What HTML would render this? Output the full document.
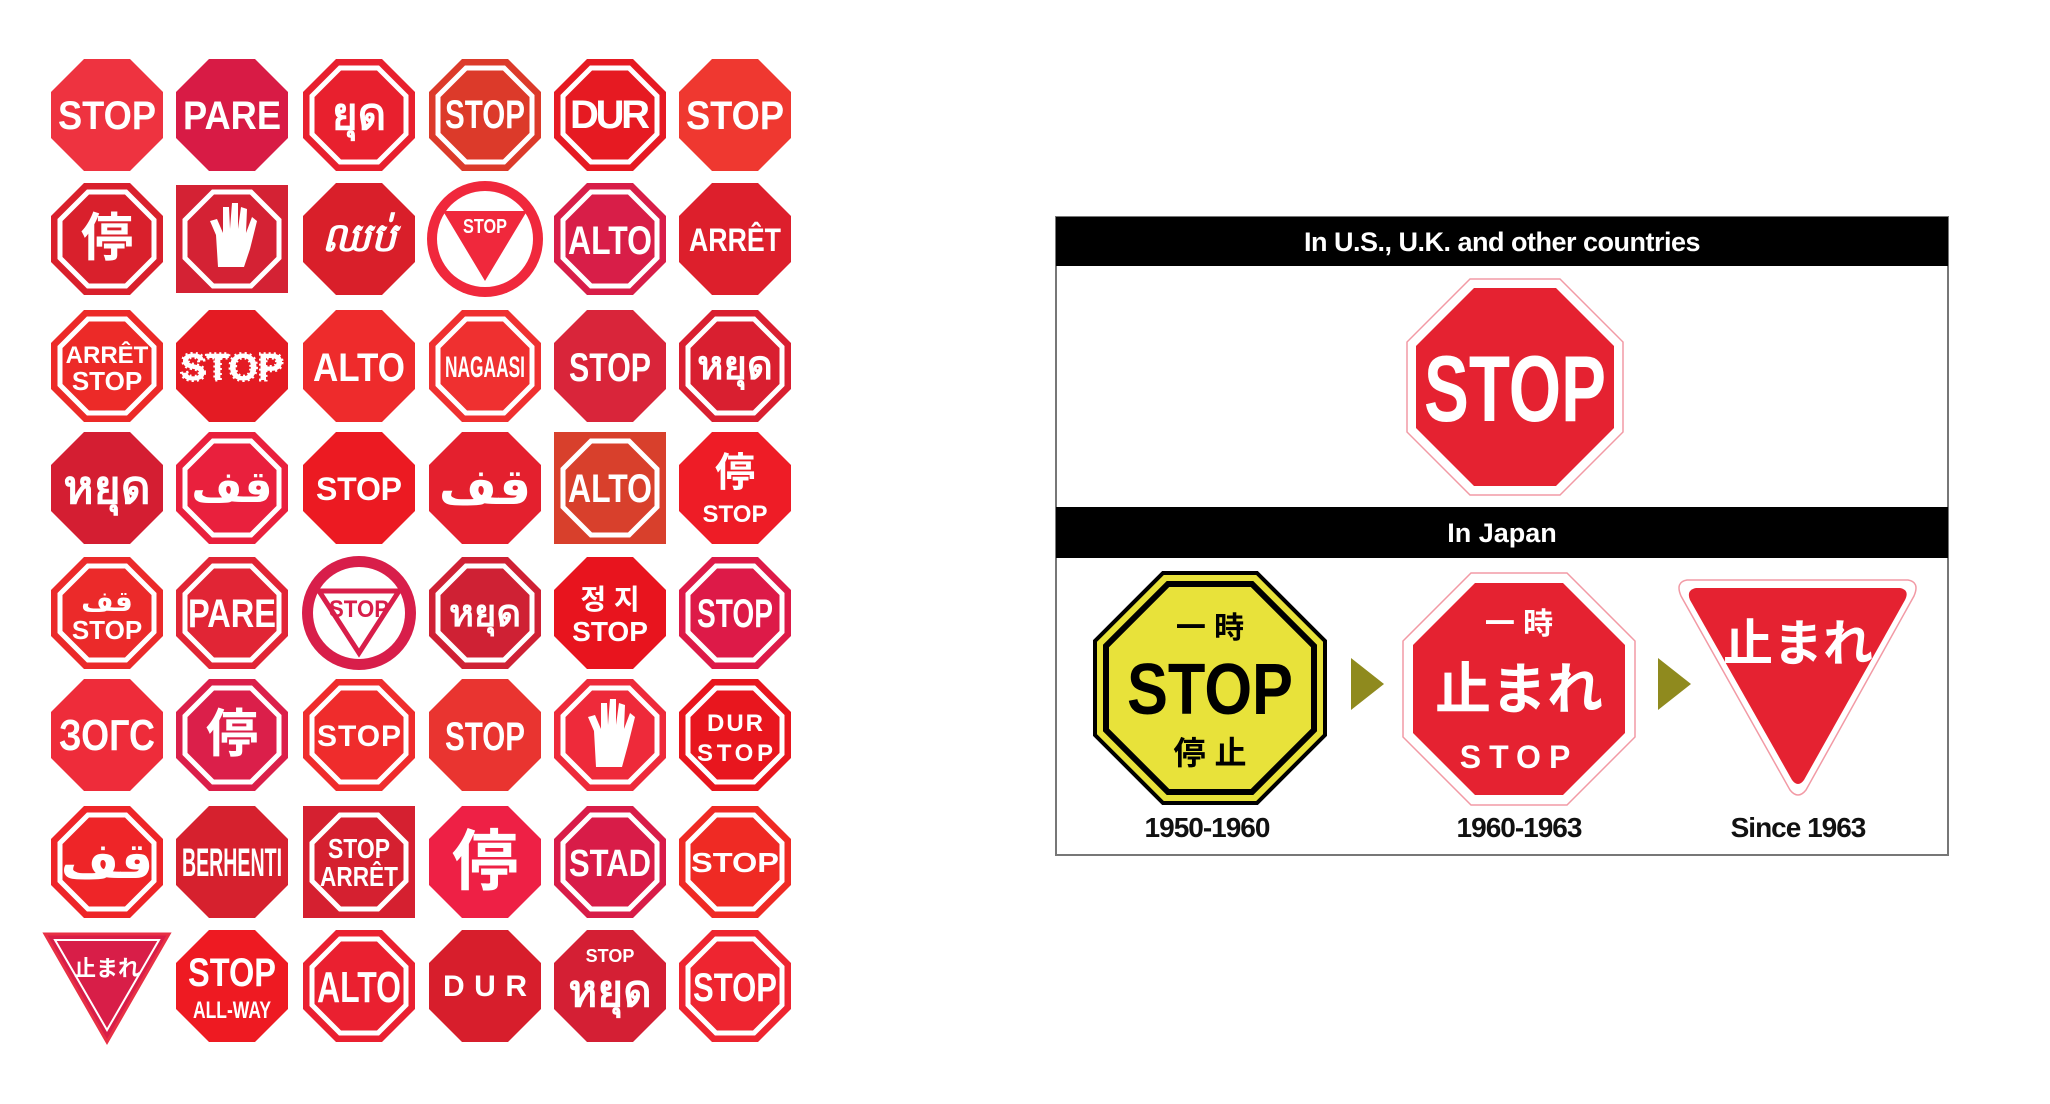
<!DOCTYPE html>
<html><head><meta charset="utf-8"><style>
html,body{margin:0;padding:0;background:#fff;width:2050px;height:1104px;overflow:hidden}
svg{display:block}
text{font-family:"Liberation Sans","DejaVu Sans","Noto Sans CJK JP",sans-serif;font-weight:bold;fill:#fff;text-anchor:middle}
</style></head><body>
<svg width="2050" height="1104" viewBox="0 0 2050 1104" xmlns="http://www.w3.org/2000/svg">
<defs>
<polygon id="o" points="23,-56 56,-23 56,23 23,56 -23,56 -56,23 -56,-23 -23,-56"/>
<polygon id="b" points="19,-47 47,-19 47,19 19,47 -19,47 -47,19 -47,-19 -19,-47" fill="none" stroke="#fff" stroke-width="5"/>
</defs>
<g font-size="40">
<!-- row 1 -->
<g transform="translate(107,115)"><use href="#o" fill="#ee3340"/><text y="14" textLength="98" lengthAdjust="spacingAndGlyphs">STOP</text></g>
<g transform="translate(232,115)"><use href="#o" fill="#d81b45"/><text y="14" font-weight="normal" textLength="98" lengthAdjust="spacingAndGlyphs">PARE</text></g>
<g transform="translate(359,115)"><use href="#o" fill="#e8202e"/><use href="#b"/><text y="14" font-size="44">ยุด</text></g>
<g transform="translate(485,115)"><use href="#o" fill="#dc3a2a"/><use href="#b"/><text y="13" textLength="80" lengthAdjust="spacingAndGlyphs">STOP</text></g>
<g transform="translate(610,115)"><use href="#o" fill="#e61a22"/><use href="#b"/><text y="13" textLength="80">DUR</text></g>
<g transform="translate(735,115)"><use href="#o" fill="#ef3830"/><text y="14" font-weight="normal" textLength="98" lengthAdjust="spacingAndGlyphs">STOP</text></g>
<!-- row 2 -->
<g transform="translate(107,239)"><use href="#o" fill="#d9202c"/><use href="#b"/><text y="17" font-size="52">停</text></g>
<g transform="translate(232,239)"><rect x="-56" y="-54" width="112" height="108" fill="#d42234"/><use href="#b"/><path d="M-14,28 L-16,-4 L-22,-18 L-15,-20 L-9,-6 L-9,-32 L-3,-32 L-2,-10 L0,-36 L6,-36 L6,-10 L9,-32 L15,-30 L14,-6 L20,-22 L25,-18 L18,10 L12,28Z" fill="#fff"/></g>
<g transform="translate(359,239)"><use href="#o" fill="#d91f2a"/><text y="12" font-size="40" font-style="italic">ឈប់</text></g>
<g transform="translate(485,239)"><circle r="58" fill="#f0283c"/><circle r="48" fill="#fff"/><polygon points="-42,-28 42,-28 0,42" fill="#f0283c"/><text y="-6" font-size="20" textLength="44" lengthAdjust="spacingAndGlyphs">STOP</text></g>
<g transform="translate(610,239)"><use href="#o" fill="#d81e48"/><use href="#b"/><text y="15" textLength="84" lengthAdjust="spacingAndGlyphs">ALTO</text></g>
<g transform="translate(735,239)"><use href="#o" fill="#dd1f2c"/><text y="12" font-size="32" textLength="92" lengthAdjust="spacingAndGlyphs">ARRÊT</text></g>
<!-- row 3 -->
<g transform="translate(107,366)"><use href="#o" fill="#ec2a28"/><use href="#b"/><text y="-3" font-size="24" font-weight="normal">ARRÊT</text><text y="24" font-size="26" font-weight="normal">STOP</text></g>
<g transform="translate(232,366)"><use href="#o" fill="#e41b23"/><text y="14" font-size="38" fill="none" stroke="#fff" stroke-width="3" stroke-dasharray="2 3">STOP</text></g>
<g transform="translate(359,366)"><use href="#o" fill="#ee2b2c"/><text y="15" textLength="92" lengthAdjust="spacingAndGlyphs">ALTO</text></g>
<g transform="translate(485,366)"><use href="#o" fill="#ef3030"/><use href="#b"/><text y="11" font-size="30" textLength="80" lengthAdjust="spacingAndGlyphs">NAGAASI</text></g>
<g transform="translate(610,366)"><use href="#o" fill="#d9253a"/><text y="15" font-weight="normal" textLength="82" lengthAdjust="spacingAndGlyphs">STOP</text></g>
<g transform="translate(735,366)"><use href="#o" fill="#d91f30"/><use href="#b"/><text y="13" font-size="40">หยุด</text></g>
<!-- row 4 -->
<g transform="translate(107,488)"><use href="#o" fill="#d41e32"/><text y="15" font-size="46">หยุด</text></g>
<g transform="translate(232,488)"><use href="#o" fill="#e9203d"/><use href="#b"/><text y="14" font-size="44">قف</text></g>
<g transform="translate(359,488)"><use href="#o" fill="#ec1a22"/><text y="12" font-size="32" textLength="86">STOP</text></g>
<g transform="translate(485,488)"><use href="#o" fill="#e4202e"/><text y="16" font-size="50">قف</text></g>
<g transform="translate(610,488)"><rect x="-56" y="-56" width="112" height="112" fill="#d8402c"/><use href="#b"/><text y="14" font-weight="normal" textLength="84" lengthAdjust="spacingAndGlyphs">ALTO</text></g>
<g transform="translate(735,488)"><use href="#o" fill="#ee1c26"/><text y="-2" font-size="40" font-weight="normal">停</text><text y="34" font-size="24" font-weight="normal">STOP</text></g>
<!-- row 5 -->
<g transform="translate(107,613)"><use href="#o" fill="#eb2a2a"/><use href="#b"/><text y="-2" font-size="28">قف</text><text y="26" font-size="26" font-weight="normal">STOP</text></g>
<g transform="translate(232,613)"><use href="#o" fill="#e12535"/><use href="#b"/><text y="14" font-weight="normal" textLength="88" lengthAdjust="spacingAndGlyphs">PARE</text></g>
<g transform="translate(359,613)"><circle r="57" fill="#d81e4a"/><circle r="46" fill="#fff"/><polygon points="-40,-22 40,-22 0,40" fill="none" stroke="#d81e4a" stroke-width="5"/><text y="4" font-size="24" style="fill:#d81e4a" textLength="60" lengthAdjust="spacingAndGlyphs">STOP</text></g>
<g transform="translate(485,613)"><use href="#o" fill="#cf2134"/><use href="#b"/><text y="13" font-size="38" font-weight="normal">หยุด</text></g>
<g transform="translate(610,613)"><use href="#o" fill="#e8141e"/><text y="-4" font-size="28">정 지</text><text y="28" font-size="28" font-weight="normal">STOP</text></g>
<g transform="translate(735,613)"><use href="#o" fill="#dd1a48"/><use href="#b"/><text y="14" font-weight="normal" textLength="76" lengthAdjust="spacingAndGlyphs">STOP</text></g>
<!-- row 6 -->
<g transform="translate(107,735)"><use href="#o" fill="#ee2c3a"/><text y="15" font-size="44" textLength="96" lengthAdjust="spacingAndGlyphs">ЗОГС</text></g>
<g transform="translate(232,735)"><use href="#o" fill="#db1f4a"/><use href="#b"/><text y="17" font-size="52" font-weight="normal">停</text></g>
<g transform="translate(359,735)"><use href="#o" fill="#ef2c2c"/><use href="#b"/><text y="11" font-size="30" textLength="84">STOP</text></g>
<g transform="translate(485,735)"><use href="#o" fill="#e93430"/><text y="15" font-weight="normal" textLength="80" lengthAdjust="spacingAndGlyphs">STOP</text></g>
<g transform="translate(610,735)"><use href="#o" fill="#ee2a3a"/><use href="#b"/><path d="M-14,32 L-16,-4 L-22,-18 L-15,-20 L-9,-6 L-9,-32 L-3,-32 L-2,-10 L0,-36 L6,-36 L6,-10 L9,-32 L15,-30 L14,-6 L20,-22 L25,-18 L18,10 L12,32Z" fill="#fff"/></g>
<g transform="translate(735,735)"><use href="#o" fill="#e8161e"/><use href="#b"/><text y="-4" font-size="24" textLength="56">DUR</text><text y="26" font-size="24" textLength="76">STOP</text></g>
<!-- row 7 -->
<g transform="translate(107,862)"><use href="#o" fill="#ee2528"/><use href="#b"/><text y="16" font-size="50">قف</text></g>
<g transform="translate(232,862)"><use href="#o" fill="#d6212e"/><text y="14" font-size="40" font-weight="normal" textLength="100" lengthAdjust="spacingAndGlyphs">BERHENTI</text></g>
<g transform="translate(359,862)"><rect x="-56" y="-56" width="112" height="112" fill="#d52030"/><use href="#b"/><text y="-4" font-size="28" font-weight="normal" textLength="62" lengthAdjust="spacingAndGlyphs">STOP</text><text y="24" font-size="28" font-weight="normal" textLength="78" lengthAdjust="spacingAndGlyphs">ARRÊT</text></g>
<g transform="translate(485,862)"><use href="#o" fill="#ee2045"/><text y="22" font-size="66">停</text></g>
<g transform="translate(610,862)"><use href="#o" fill="#d81c48"/><use href="#b"/><text y="14" font-size="38" textLength="82" lengthAdjust="spacingAndGlyphs">STAD</text></g>
<g transform="translate(735,862)"><use href="#o" fill="#ef2a24"/><use href="#b"/><text y="10" font-size="28" font-family="Liberation Serif,serif" textLength="88" lengthAdjust="spacingAndGlyphs">STOP</text></g>
<!-- row 8 -->
<g transform="translate(107,986)"><polygon points="-62,-52 62,-52 0,56" fill="#d81e48" stroke="#e83045" stroke-width="3"/><polygon points="-52,-46 52,-46 0,44" fill="none" stroke="#fff" stroke-width="2"/><text y="-10" font-size="22">止まれ</text></g>
<g transform="translate(232,986)"><use href="#o" fill="#ee1a22"/><text y="0" font-size="40" font-weight="normal" textLength="88" lengthAdjust="spacingAndGlyphs">STOP</text><text y="32" font-size="24" font-weight="normal" textLength="78" lengthAdjust="spacingAndGlyphs">ALL-WAY</text></g>
<g transform="translate(359,986)"><use href="#o" fill="#ea2030"/><use href="#b"/><text y="16" font-size="44" textLength="84" lengthAdjust="spacingAndGlyphs">ALTO</text></g>
<g transform="translate(485,986)"><use href="#o" fill="#d71e2c"/><text y="10" font-size="30" textLength="84">DUR</text></g>
<g transform="translate(610,986)"><use href="#o" fill="#d41f34"/><text y="-24" font-size="18" font-weight="normal">STOP</text><text y="20" font-size="44">หยุด</text></g>
<g transform="translate(735,986)"><use href="#o" fill="#ee2530"/><use href="#b"/><text y="15" font-weight="normal" textLength="84" lengthAdjust="spacingAndGlyphs">STOP</text></g>
</g>

<!-- right panel -->
<rect x="1056" y="217" width="892" height="638" fill="#fff" stroke="#777" stroke-width="2"/>
<rect x="1056" y="217" width="892" height="49" fill="#000"/>
<text x="1502" y="251" font-size="27" letter-spacing="-0.5">In U.S., U.K. and other countries</text>
<rect x="1056" y="507" width="892" height="51" fill="#000"/>
<text x="1502" y="542" font-size="27">In Japan</text>

<g transform="translate(1515,387)">
<polygon points="45,-108 108,-45 108,45 45,108 -45,108 -108,45 -108,-45 -45,-108" fill="#fff" stroke="#f29aa5" stroke-width="1.5"/>
<polygon points="41,-99 99,-41 99,41 41,99 -41,99 -99,41 -99,-41 -41,-99" fill="#e52231"/>
<text y="34" font-size="94" textLength="182" lengthAdjust="spacingAndGlyphs" font-family="DejaVu Sans,sans-serif">STOP</text>
</g>

<g transform="translate(1210,688)">
<polygon points="47,-115 115,-47 115,47 47,115 -47,115 -115,47 -115,-47 -47,-115" fill="#e8e23a" stroke="#000" stroke-width="4"/>
<polygon points="42,-104 104,-42 104,42 42,104 -42,104 -104,42 -104,-42 -42,-104" fill="none" stroke="#000" stroke-width="6"/>
<text y="-50" font-size="30" style="fill:#000" font-family="Noto Sans CJK JP,sans-serif" font-weight="900">一 時</text>
<text y="26" font-size="72" style="fill:#000" textLength="166" lengthAdjust="spacingAndGlyphs" font-family="DejaVu Sans,sans-serif">STOP</text>
<text y="76" font-size="32" style="fill:#000" font-family="Noto Sans CJK JP,sans-serif" font-weight="900">停 止</text>
</g>
<polygon points="1351,658 1384,684 1351,710" fill="#8f8a1e"/>
<g transform="translate(1519,689)">
<polygon points="48,-116 116,-48 116,48 48,116 -48,116 -116,48 -116,-48 -48,-116" fill="#fff" stroke="#f29aa5" stroke-width="1.5"/>
<polygon points="44,-106 106,-44 106,44 44,106 -44,106 -106,44 -106,-44 -44,-106" fill="#e52231"/>
<text y="-55" font-size="30" font-weight="normal" font-family="Noto Sans CJK JP,sans-serif">一  時</text>
<text y="20" font-size="56" font-family="Noto Sans CJK JP,sans-serif" font-weight="900">止まれ</text>
<text y="79" font-size="32" letter-spacing="8">STOP</text>
</g>
<polygon points="1658,658 1691,684 1658,710" fill="#8f8a1e"/>
<g>
<path d="M1687,580 L1908,580 Q1920,582 1914,596 L1806,790 Q1798,800 1790,790 L1681,596 Q1675,582 1687,580Z" fill="#fff" stroke="#f29aa5" stroke-width="1.5"/>
<path d="M1696,588 L1900,588 Q1910,590 1905,600 L1804,780 Q1798,788 1792,780 L1690,600 Q1686,590 1696,588Z" fill="#e52231"/>
<text x="1798" y="661" font-size="50" font-weight="normal" font-family="Noto Sans CJK JP,sans-serif">止まれ</text>
</g>
<g font-size="28">
<text x="1207" y="837" style="fill:#111" letter-spacing="-1">1950-1960</text>
<text x="1519" y="837" style="fill:#111" letter-spacing="-1">1960-1963</text>
<text x="1798" y="837" style="fill:#111" letter-spacing="-1">Since 1963</text>
</g>
</svg>
</body></html>
